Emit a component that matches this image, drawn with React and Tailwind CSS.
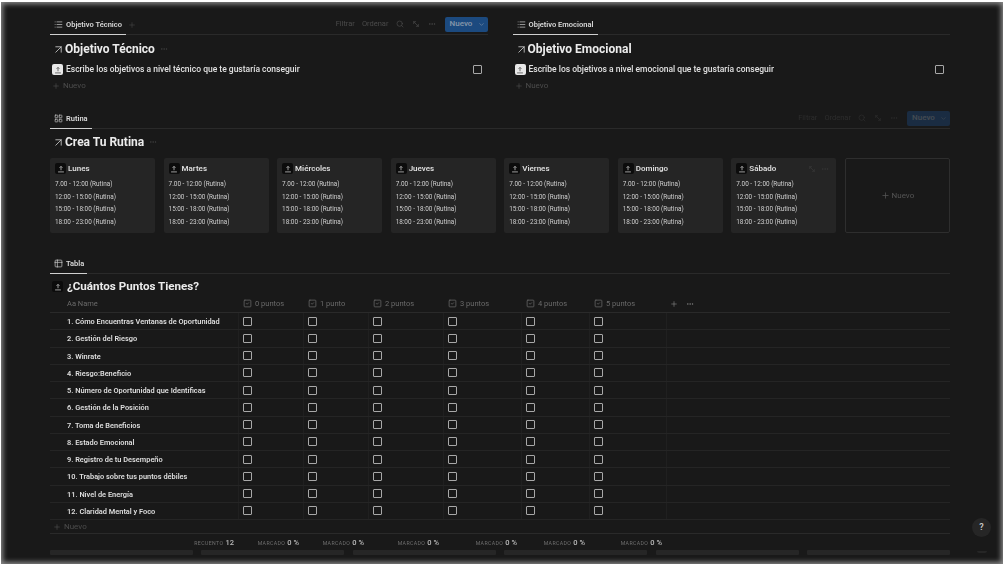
import React from "react";
import { List, LayoutGrid, Table2, ArrowUpRight, Search, MoveDiagonal2, MoreHorizontal, ChevronDown, Plus, SquareCheck } from "lucide-react";

const F = { fontFamily: 'Roboto, "Noto Sans", sans-serif' };
const days = ["Lunes", "Martes", "Miércoles", "Jueves", "Viernes", "Domingo", "Sábado"];
const slots = ["7.00 - 12:00 (Rutina)", "12:00 - 15:00 (Rutina)", "15:00 - 18:00 (Rutina)", "18:00 - 23:00 (Rutina)"];
const points = ["0 puntos", "1 punto", "2 puntos", "3 puntos", "4 puntos", "5 puntos"];
const rows = [
  "1. Cómo Encuentras Ventanas de Oportunidad",
  "2. Gestión del Riesgo",
  "3. Winrate",
  "4. Riesgo:Beneficio",
  "5. Número de Oportunidad que Identificas",
  "6. Gestión de la Posición",
  "7. Toma de Beneficios",
  "8. Estado Emocional",
  "9. Registro de tu Desempeño",
  "10. Trabajo sobre tus puntos débiles",
  "11. Nivel de Energía",
  "12. Claridad Mental y Foco",
];
const GRID = "grid grid-cols-[188px_65px_65px_75px_78px_68px_77px_1fr]";

function PageIcon({ light, size = 11 }) {
  return (
    <span className={`flex shrink-0 items-center justify-center rounded-[2px] ${light ? "bg-[#e8e8e8]" : "bg-[#0c0c0c]"}`} style={{ width: size, height: size }}>
      <svg viewBox="0 0 12 12" width={size - 1} height={size - 1} fill="none" stroke={light ? "#555" : "#bbb"} strokeWidth="1">
        <path d="M6 7.5V3M4.3 4.6 6 2.8l1.7 1.8" />
        <path d="M2.5 9.5h7" />
      </svg>
    </span>
  );
}

function Check() {
  return <span className="block h-[9px] w-[9px] rounded-[1px] border-[1.3px] border-[#a8a8a8]" />;
}

function Toolbar({ faint }) {
  return (
    <div className={`ml-auto flex items-center text-[7.5px] text-[#4b4b4b] ${faint ? "opacity-40" : ""}`}>
      <span className="mr-[7px]">Filtrar</span>
      <span className="mr-[7px]">Ordenar</span>
      <Search size={8} className="mr-[8px]" />
      <MoveDiagonal2 size={8} className="mr-[8px]" />
      <MoreHorizontal size={8} className="mr-[9px]" />
      <div className="flex h-[15px] w-[43px] items-center rounded-[2px] bg-[#1c4a7f] pl-[5px] text-[8px] font-semibold text-[#8294a8]">
        Nuevo
        <ChevronDown size={7} className="ml-auto mr-[3px]" />
      </div>
    </div>
  );
}

function Tab({ icon: Icon, label, width, plus, children }) {
  return (
    <div className="flex h-[21px] items-center border-b border-[#2a2a2a]">
      <div className="relative flex h-full items-center gap-[3px] whitespace-nowrap pl-[4px] pt-[1px] text-[7.5px] font-semibold text-[#d8d8d8]" style={{ width }}>
        <Icon size={9} className="text-[#bdbdbd]" />
        {label}
        {plus && <Plus size={8} className="absolute left-[78px] text-[#444]" />}
        <span className="absolute -bottom-px left-0 right-0 h-[1.5px] bg-[#d0d0d0]" />
      </div>
      {children}
    </div>
  );
}

function Heading({ children, dots, down }) {
  return (
    <div className={`flex h-[26px] items-center pl-[2px] text-[12px] font-bold text-[#ececec] ${down ? "pt-[2px]" : ""}`}>
      <ArrowUpRight size={13} strokeWidth={1.5} className="text-[#d0d0d0]" />
      {children}
      {dots && <MoreHorizontal size={8} className="ml-[5px] text-[#444]" />}
    </div>
  );
}

function Objective({ title, text, tabWidth, plus, toolbar, dots }) {
  return (
    <div>
      <Tab icon={List} label={title} width={tabWidth} plus={plus}>{toolbar}</Tab>
      <Heading dots={dots} down>{title}</Heading>
      <div className="flex h-[17px] items-center pl-[2px] pr-[6px] text-[8.5px] font-medium text-[#e2e2e2]">
        <PageIcon light />
        <span className="ml-[3px]">{text}</span>
        <span className="ml-auto"><Check /></span>
      </div>
      <div className="flex h-[16px] items-center gap-[3px] pl-[2px] text-[8px] text-[#4c4c4c]">
        <Plus size={8} />
        Nuevo
      </div>
    </div>
  );
}

function Card({ day, last }) {
  return (
    <div className="relative h-[75px] rounded-[2px] bg-[#252525] px-[5px] pt-[5px]">
      <div className="flex h-[11px] items-center gap-[2px] text-[8px] font-semibold text-[#dedede]">
        <PageIcon />
        {day}
        {last && (
          <span className="ml-auto flex items-center gap-[5px] pr-[2px] text-[#3a3a3a]">
            <MoveDiagonal2 size={8} />
            <MoreHorizontal size={8} />
          </span>
        )}
      </div>
      <div className="mt-[5px] flex flex-col">
        {slots.map((s) => (
          <div key={s} className="flex h-[12.5px] items-center text-[6.4px] text-[#cfcfcf] whitespace-nowrap">{s}</div>
        ))}
      </div>
    </div>
  );
}

export default function App() {
  return (
    <div className="relative h-[565px] w-[1005px] overflow-hidden bg-white" style={F}>
      <div className="absolute left-[1px] top-[2px] h-[562px] w-[1002px] bg-[#191919] shadow-[inset_0_0_5px_2px_#8a8a8a]" />
      <div className="relative h-[565px] pl-[50px] pr-[55px] pt-[14px] blur-[0.4px]">
        <div className="grid grid-cols-2 gap-x-[25px]">
          <Objective title="Objetivo Técnico" text="Escribe los objetivos a nivel técnico que te gustaría conseguir" tabWidth={76} plus toolbar={<Toolbar />} dots />
          <Objective title="Objetivo Emocional" text="Escribe los objetivos a nivel emocional que te gustaría conseguir" tabWidth={85} />
        </div>

        <div className="mt-[14px]">
          <Tab icon={LayoutGrid} label="Rutina" width={42}><Toolbar faint /></Tab>
          <Heading dots>Crea Tu Rutina</Heading>
          <div className="mt-[3px] grid grid-cols-8 gap-x-[8.4px]">
            {days.map((d, i) => <Card key={d} day={d} last={i === 6} />)}
            <div className="flex h-[75px] items-center justify-center gap-[2px] rounded-[2px] border border-[#2e2e2e] text-[8px] text-[#555]">
              <Plus size={9} />
              Nuevo
            </div>
          </div>
        </div>

        <div className="mt-[20px]">
          <Tab icon={Table2} label="Tabla" width={37} />
          <div className="flex h-[23px] items-center pl-[2px] pt-[2px] text-[11.6px] font-bold text-[#ececec]">
            <PageIcon />
            <span className="ml-[4px]">¿Cuántos Puntos Tienes?</span>
          </div>
          <div className={`${GRID} h-[16px] items-center border-b border-[#2a2a2a] pb-[2px] text-[7.5px] text-[#6a6a6a]`}>
            <div className="pl-[17px]">Aa Name</div>
            {points.map((p) => (
              <div key={p} className="flex items-center gap-[3px] pl-[5px]">
                <SquareCheck size={9} />
                {p}
              </div>
            ))}
            <div className="flex items-center gap-[8px] pl-[4px] text-[#808080]">
              <Plus size={8} />
              <MoreHorizontal size={8} />
            </div>
          </div>
          {rows.map((r) => (
            <div key={r} className={`${GRID} h-[17.25px] items-center border-b border-[#252525]`}>
              <div className="pl-[17px] pt-[1px] text-[7.4px] font-semibold text-[#dedede] whitespace-nowrap">{r}</div>
              {points.map((p) => (
                <div key={p} className="flex h-full items-center border-l border-[#202020] pl-[3.5px]"><Check /></div>
              ))}
              <div className="h-full border-l border-[#202020]" />
            </div>
          ))}
          <div className="flex h-[14px] items-center gap-[3px] border-b border-[#2a2a2a] pl-[3px] text-[8px] text-[#4c4c4c]">
            <Plus size={8} />
            Nuevo
          </div>
          <div className={`${GRID} h-[16px] items-center pt-[1px]`}>
            {["RECUENTO", "MARCADO", "MARCADO", "MARCADO", "MARCADO", "MARCADO", "MARCADO"].map((l, i) => (
              <div key={i} className="flex items-baseline justify-end gap-[2px] pr-[4px]">
                <span className="text-[5.2px] tracking-[0.4px] text-[#6e6e6e]">{l}</span>
                <span className="text-[7.5px] font-medium text-[#bdbdbd]">{i === 0 ? "12" : "0 %"}</span>
              </div>
            ))}
          </div>
          <div className="grid grid-cols-6 gap-x-[8.4px]">
            {[0, 1, 2, 3, 4, 5].map((i) => <div key={i} className="h-[5px] rounded-[1px] bg-[#262626]" />)}
          </div>
        </div>
      </div>
      <div className="absolute left-[972px] top-[518px] flex h-[19px] w-[19px] items-center justify-center rounded-full bg-[#262626] text-[9px] font-semibold text-[#c8c8c8]">?</div>
      <div className="absolute left-[977px] top-[551px] h-[2px] w-[10px] rounded-b-full bg-[#262626]" />
    </div>
  );
}
